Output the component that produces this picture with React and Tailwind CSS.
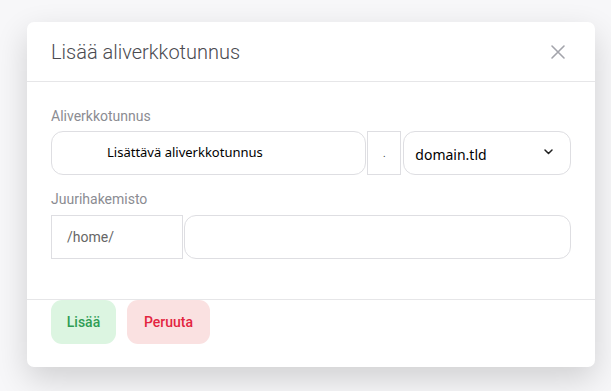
import React from "react";

export default function App() {
  return (
    <div className="w-[611px] h-[391px] bg-[#f7f7f9] pt-[22px] pl-[27px] overflow-hidden" style={{ fontFamily: "Roboto, sans-serif" }}>
      <div className="w-[568px] h-[345px] bg-white rounded-[7px] shadow-[0_12px_32px_rgba(0,0,0,0.16)] flex flex-col">
        <div className="h-[60px] flex items-center justify-between px-[24px] border-b border-[#e6e6e8]">
          <span className="text-[20px] font-light text-[#4a4a4f] leading-none">Lisää aliverkkotunnus</span>
          <svg width="16" height="16" viewBox="0 0 16 16" className="mr-[5px]">
            <path d="M2 2L14 14M14 2L2 14" stroke="#a3a4ab" strokeWidth="1.6" strokeLinecap="round" />
          </svg>
        </div>
        <div className="h-[218px] px-[24px] pt-[24px] border-b border-[#e6e6e8]">
          <div className="text-[14px] text-[#8b8c92] leading-[20px]">Aliverkkotunnus</div>
          <div className="flex mt-[5px] h-[44px]">
            <div className="w-[316px] h-full border border-[#dedee2] rounded-[12px] flex items-center pl-[55px] text-[13px] text-black" style={{ fontFamily: '"Noto Sans", sans-serif' }}>
              Lisättävä aliverkkotunnus
            </div>
            <div className="w-[34px] h-full border border-[#dedee2] flex items-center justify-center text-[10px] text-[#333] ml-[1px]">.</div>
            <div className="w-[168px] h-full border border-[#dedee2] rounded-[12px] flex items-center justify-between pl-[11px] pr-[17px] ml-[2px] text-[14px] text-black" style={{ fontFamily: '"Noto Sans", sans-serif' }}>
              <span className="mt-[2px]">domain.tld</span>
              <svg width="9" height="6" viewBox="0 0 9 6" className="mb-[3px]">
                <path d="M1 1L4.5 4.5L8 1" stroke="#222" strokeWidth="1.5" fill="none" strokeLinecap="round" strokeLinejoin="round" />
              </svg>
            </div>
          </div>
          <div className="text-[14px] text-[#8b8c92] leading-[20px] mt-[14px]">Juurihakemisto</div>
          <div className="flex mt-[6px] h-[44px]">
            <div className="w-[132px] h-full border border-[#dedee2] flex items-center pl-[15px] text-[14px] text-[#666]">/home/</div>
            <div className="flex-1 h-full border border-[#dedee2] rounded-[12px] ml-[1px]"></div>
          </div>
        </div>
        <div className="flex gap-[11px] px-[24px] pt-0">
          <button className="w-[65px] h-[44px] rounded-[11px] bg-[#dcf5e1] text-[#2f9d55] text-[14px] font-medium">Lisää</button>
          <button className="w-[83px] h-[44px] rounded-[11px] bg-[#fae1e1] text-[#e3253f] text-[14px] font-medium">Peruuta</button>
        </div>
      </div>
    </div>
  );
}
